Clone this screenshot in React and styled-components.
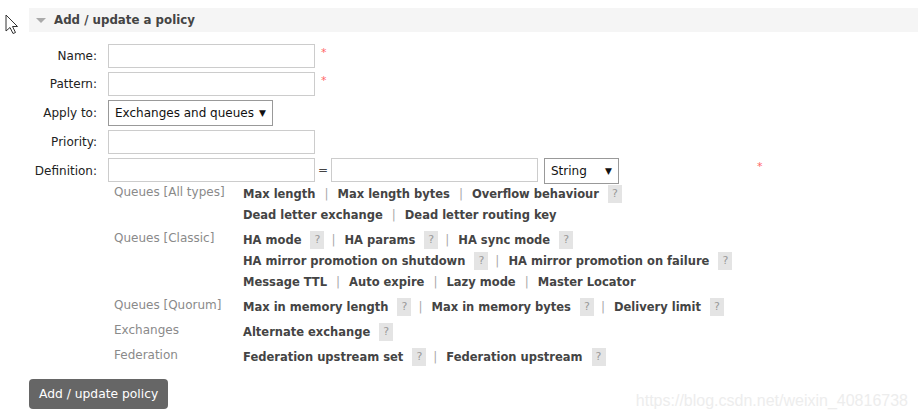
import React from "react";
import styled, { createGlobalStyle } from "styled-components";

const GlobalStyle = createGlobalStyle`
  body {
    margin: 0;
    background: #fff;
    font-family: "DejaVu Sans", Verdana, sans-serif;
    font-size: 12px;
    color: #444;
  }
`;

const Page = styled.div`
  position: relative;
  width: 918px;
  height: 419px;
  padding: 8px 0 0 29px;
  box-sizing: border-box;
  overflow: hidden;
`;

const Cursor = styled.svg`
  position: absolute;
  left: 5px;
  top: 14px;
`;

const SectionHeader = styled.div`
  display: flex;
  align-items: center;
  height: 24px;
  background: #f5f5f5;
  padding-left: 7px;
  gap: 8px;
  font-weight: bold;
  color: #444;
  font-size: 11.8px;
`;

const Caret = styled.span`
  width: 0;
  height: 0;
  border-left: 5px solid transparent;
  border-right: 5px solid transparent;
  border-top: 5px solid #aaa;
  margin-top: 1px;
`;

const Form = styled.div`
  display: grid;
  grid-template-columns: 68px auto;
  column-gap: 11px;
  row-gap: 4px;
  margin-top: 12px;
  align-items: center;
`;

const Label = styled.label`
  text-align: right;
  color: #222;
  font-size: 12px;
`;

const Field = styled.div`
  display: flex;
  align-items: flex-start;
`;

const Input = styled.input`
  width: 207px;
  height: 24px;
  box-sizing: border-box;
  border: 1px solid #ccc;
  margin: 0;
  padding: 2px 4px;
  font: inherit;
`;

const Required = styled.span`
  color: #f66;
  font-size: 11px;
  margin-left: ${(p) => p.$offset || 6}px;
  margin-top: 2px;
`;

const SelectBox = styled.div`
  display: flex;
  align-items: center;
  justify-content: space-between;
  width: ${(p) => p.$width}px;
  height: 26px;
  box-sizing: border-box;
  border: 1px solid #999;
  background: #fff;
  padding: 0 6px 0 6px;
  color: #111;
  font-size: 12px;
  margin-left: ${(p) => p.$ml || 0}px;
`;

const Arrow = styled.span`
  font-size: 9px;
  color: #111;
`;

const Equals = styled.span`
  color: #444;
  width: 16px;
  text-align: center;
  line-height: 24px;
`;

const Help = styled.div`
  display: grid;
  grid-template-columns: 129px auto;
  margin: -1px 0 0 85px;
`;

const GroupLabel = styled.div`
  color: #8a8a8a;
  line-height: 21px;
  padding-bottom: 4px;
  font-size: 12px;
  margin-top: -1px;
`;

const GroupItems = styled.div`
  padding-bottom: 4px;
`;

const Line = styled.div`
  display: flex;
  align-items: center;
  height: 21px;
  white-space: nowrap;
`;

const Item = styled.span`
  font-weight: bold;
  color: #444;
  font-size: 11.5px;
`;

const Sep = styled.span`
  color: #aaa;
  margin: 0 9px;
`;

const Q = styled.span`
  display: inline-flex;
  align-items: center;
  justify-content: center;
  width: 14px;
  height: 18px;
  background: #e4e4e4;
  color: #999;
  font-size: 11px;
  margin-left: 9px;
`;

const Button = styled.button`
  margin-top: 8px;
  height: 30px;
  padding: 0 10px;
  background: #666;
  color: #fff;
  border: none;
  border-radius: 4px;
  font: inherit;
  font-size: 12.3px;
`;

const Watermark = styled.div`
  position: absolute;
  right: 10px;
  bottom: 9px;
  font-family: "Liberation Sans", Arial, sans-serif;
  font-size: 16px;
  color: #ededed;
`;

const groups = [
  {
    label: "Queues [All types]",
    lines: [
      [["Max length"], ["Max length bytes"], ["Overflow behaviour", true]],
      [["Dead letter exchange"], ["Dead letter routing key"]],
    ],
  },
  {
    label: "Queues [Classic]",
    lines: [
      [["HA mode", true], ["HA params", true], ["HA sync mode", true]],
      [["HA mirror promotion on shutdown", true], ["HA mirror promotion on failure", true]],
      [["Message TTL"], ["Auto expire"], ["Lazy mode"], ["Master Locator"]],
    ],
  },
  {
    label: "Queues [Quorum]",
    lines: [[["Max in memory length", true], ["Max in memory bytes", true], ["Delivery limit", true]]],
  },
  { label: "Exchanges", lines: [[["Alternate exchange", true]]] },
  {
    label: "Federation",
    lines: [[["Federation upstream set", true], ["Federation upstream", true]]],
  },
];

function HelpLine({ items }) {
  return (
    <Line>
      {items.map(([text, help], i) => (
        <React.Fragment key={text}>
          {i > 0 && <Sep style={items[i - 1][1] ? { marginLeft: 7 } : null}>|</Sep>}
          <Item>{text}</Item>
          {help && <Q>?</Q>}
        </React.Fragment>
      ))}
    </Line>
  );
}

export default function App() {
  return (
    <>
      <GlobalStyle />
      <Page>
        <Cursor width="14" height="21" viewBox="0 0 14 21">
          <path
            d="M1 1 L1 17 L5 13.5 L8 19.5 L10.5 18.5 L7.5 12.5 L12.5 12.5 Z"
            fill="#fff"
            stroke="#333"
            strokeWidth="1"
          />
        </Cursor>
        <SectionHeader>
          <Caret />
          Add / update a policy
        </SectionHeader>
        <Form>
          <Label>Name:</Label>
          <Field>
            <Input />
            <Required>*</Required>
          </Field>
          <Label>Pattern:</Label>
          <Field>
            <Input />
            <Required>*</Required>
          </Field>
          <Label>Apply to:</Label>
          <Field>
            <SelectBox $width={165}>
              Exchanges and queues <Arrow>▼</Arrow>
            </SelectBox>
          </Field>
          <Label>Priority:</Label>
          <Field>
            <Input />
          </Field>
          <Label>Definition:</Label>
          <Field>
            <Input />
            <Equals>=</Equals>
            <Input />
            <SelectBox $width={75} $ml={6}>
              String <Arrow>▼</Arrow>
            </SelectBox>
            <Required $offset={138}>*</Required>
          </Field>
        </Form>
        <Help>
          {groups.map((g) => (
            <React.Fragment key={g.label}>
              <GroupLabel>{g.label}</GroupLabel>
              <GroupItems>
                {g.lines.map((l, i) => (
                  <HelpLine key={i} items={l} />
                ))}
              </GroupItems>
            </React.Fragment>
          ))}
        </Help>
        <Button>Add / update policy</Button>
        <Watermark>https://blog.csdn.net/weixin_40816738</Watermark>
      </Page>
    </>
  );
}
